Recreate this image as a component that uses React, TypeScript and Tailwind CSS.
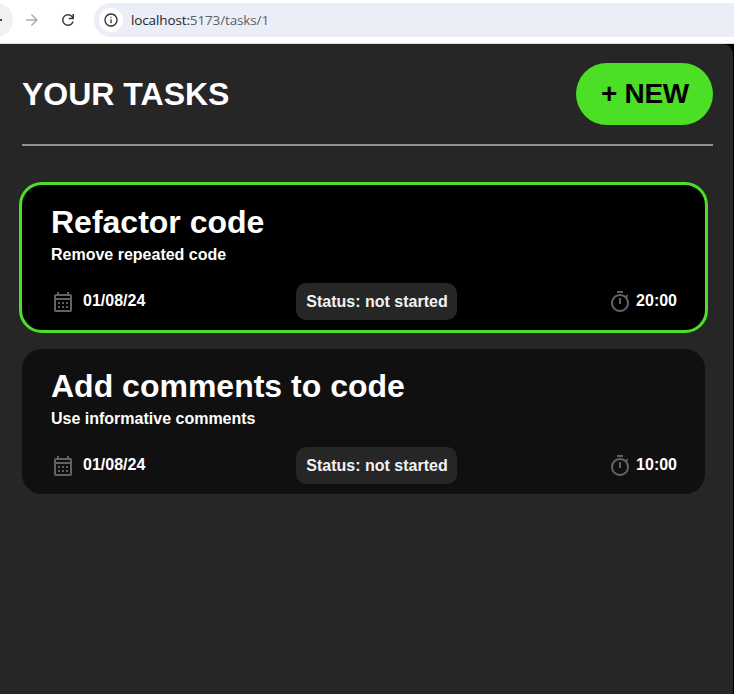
import React from "react";

type Task = { title: string; description: string; date: string; status: string; time: string; selected?: boolean };

const tasks: Task[] = [
  { title: "Refactor code", description: "Remove repeated code", date: "01/08/24", status: "not started", time: "20:00", selected: true },
  { title: "Add comments to code", description: "Use informative comments", date: "01/08/24", status: "not started", time: "10:00" },
];

function CalendarIcon() {
  return (
    <svg className="block h-6 w-6 fill-[#5f6368]" viewBox="0 -960 960 960">
      <path d="M200-80q-33 0-56.5-23.5T120-160v-560q0-33 23.5-56.5T200-800h40v-80h80v80h320v-80h80v80h40q33 0 56.5 23.5T840-720v560q0 33-23.5 56.5T760-80H200Zm0-80h560v-400H200v400Zm0-480h560v-80H200v80Z" />
      {[-480, -320].map((y) => [280, 440, 600].map((x) => <rect key={`${x}${y}`} x={x} y={y} width="80" height="80" rx="12" />))}
    </svg>
  );
}

function TimerIcon() {
  return (
    <svg className="block h-6 w-6 fill-[#5f6368]" viewBox="0 -960 960 960">
      <path d="M360-840v-80h240v80H360Zm80 440h80v-240h-80v240Zm40 320q-74 0-139.5-28.5T226-186q-49-49-77.5-114.5T120-440q0-74 28.5-139.5T226-694q49-49 114.5-77.5T480-800q62 0 119 20t107 58l56-56 56 56-56 56q38 50 58 107t20 119q0 74-28.5 139.5T734-186q-49 49-114.5 77.5T480-80Zm0-80q116 0 198-82t82-198q0-116-82-198t-198-82q-116 0-198 82t-82 198q0 116 82 198t198 82Z" />
    </svg>
  );
}

function BrowserBar() {
  return (
    <div className="flex h-11 shrink-0 items-start overflow-hidden border-b border-[#dcdde0] bg-white pt-[3px]">
      <div className="-ml-[21px] flex h-[34px] w-[34px] shrink-0 items-center justify-end rounded-full bg-[#f1f1f2] pr-[11px]">
        <span className="h-[1.5px] w-2 bg-[#47494d]" />
      </div>
      <svg className="ml-[10px] mt-[8px] h-[18px] w-[18px] shrink-0 fill-[#aaacae]" viewBox="0 -960 960 960">
        <path d="M647-440H160v-80h487L423-744l57-56 320 320-320 320-57-56 224-224Z" />
      </svg>
      <svg className="ml-[18px] mt-[8px] h-[18px] w-[18px] shrink-0 fill-[#3c3d40]" viewBox="0 -960 960 960">
        <path d="M480-160q-134 0-227-93t-93-227q0-134 93-227t227-93q69 0 132 28.500t108 81.500v-110h80v280H520v-80h168q-32-56-87.500-88T480-720q-100 0-170 70t-70 170q0 100 70 170t170 70q77 0 139-44t87-116h84q-28 106-114 173t-196 67Z" />
      </svg>
      <div className="ml-[17px] flex h-[34px] flex-1 items-center rounded-l-full bg-[#ebeef7] pl-[5px]">
        <span className="flex h-6 w-6 items-center justify-center rounded-full bg-white">
          <svg className="h-4 w-4 fill-[#333438]" viewBox="0 -960 960 960">
            <path d="M440-280h80v-240h-80v240Zm40-320q17 0 28.500-11.500T520-640q0-17-11.500-28.500T480-680q-17 0-28.500 11.500T440-640q0 17 11.500 28.500T480-600Zm0 520q-83 0-156-31.500T197-197q-54-54-85.500-127T80-480q0-83 31.500-156T197-763q54-54 127-85.500T480-880q83 0 156 31.500T763-763q54 54 85.500 127T880-480q0 83-31.500 156T763-197q-54 54-127 85.500T480-80Zm0-80q134 0 227-93t93-227q0-134-93-227t-227-93q-134 0-227 93t-93 227q0 134 93 227t227 93Z" />
          </svg>
        </span>
        <span className="ml-2 whitespace-nowrap font-['Open_Sans',sans-serif] text-[13.5px] tracking-[-0.13px] text-[#5b5e63]">
          <span className="text-[#242529]">localhost:</span>5173/tasks/1
        </span>
      </div>
    </div>
  );
}

function TaskCard({ task }: { task: Task }) {
  return (
    <article className={`flex h-[145px] w-[683px] flex-col rounded-[20px] pl-[29px] pr-7 pt-[19px] text-base font-bold text-white ${task.selected ? "bg-black outline-3 outline-[#4be026]" : "bg-[#101010]"}`}>
      <h2 className="text-[32px] leading-[37px]">{task.title}</h2>
      <p className="mt-[5px] leading-[18px]">{task.description}</p>
      <div className="mt-[19px] flex h-[37px] items-start">
        <div className="flex w-[245px] items-start pt-[7px]">
          <CalendarIcon />
          <span className="ml-2 mt-[2px] leading-[18px]">{task.date}</span>
        </div>
        <div className="flex h-[37px] w-[161px] items-center justify-center whitespace-nowrap rounded-[10px] bg-[#262626] pl-px text-[#f2f2f2]">Status: {task.status}</div>
        <div className="flex flex-1 items-start justify-end pt-[7px]">
          <TimerIcon />
          <span className="ml-1 mt-[2px] leading-[18px]">{task.time}</span>
        </div>
      </div>
    </article>
  );
}

export default function App() {
  return (
    <div className="flex h-[694px] w-[734px] flex-col overflow-hidden bg-black font-['Liberation_Sans',Arial,sans-serif]">
      <BrowserBar />
      <main className="mr-px flex-1 rounded-tr-[10px] bg-[#262626] pl-[22px] pr-5 pt-[19px]">
        <header className="flex h-[83px] items-start justify-between border-b-2 border-[#929292]">
          <h1 className="mt-[13px] text-[32px] font-bold leading-[37px] text-white">YOUR TASKS</h1>
          <button className="h-[62px] w-[137px] rounded-full bg-[#4be026] pl-px text-[28px] font-bold tracking-[-0.3px] text-black">+ NEW</button>
        </header>
        <div className="mt-[39px] flex flex-col gap-[19px]">
          {tasks.map((task) => <TaskCard key={task.title} task={task} />)}
        </div>
      </main>
    </div>
  );
}
